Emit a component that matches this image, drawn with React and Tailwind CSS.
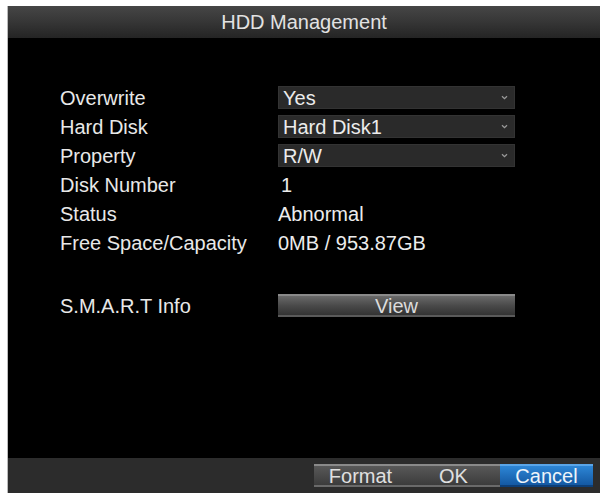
import React from "react";

const font = { fontFamily: '"Liberation Sans", Arial, sans-serif' };

function Chevron() {
  return (
    <svg width="7" height="5" viewBox="0 0 7 5" className="shrink-0">
      <path d="M1 1.2 L3.5 3.6 L6 1.2" stroke="#9a9a9a" strokeWidth="1.3" fill="none" />
    </svg>
  );
}

function Select({ value }) {
  return (
    <div className="w-[237px] h-[23px] bg-[#2a2a2a] border border-[#333] flex items-center justify-between pl-[4px] pr-[6px] text-[#ececec]">
      <span className="leading-none">{value}</span>
      <Chevron />
    </div>
  );
}

function Row({ label, children }) {
  return (
    <div className="h-[29px] flex items-center">
      <div className="w-[218px] text-[#e8e8e8] leading-none">{label}</div>
      {children}
    </div>
  );
}

function BarButton({ label, active }) {
  return (
    <div
      className={
        "w-[93px] h-[23px] flex items-center justify-center leading-none text-[20px] border-t-2 border-b-2 " +
        (active
          ? "bg-gradient-to-b from-[#2d86d6] to-[#1459a3] border-t-[#5aa5e8] border-b-[#0d3f78] text-[#eef4fa]"
          : "bg-gradient-to-b from-[#585858] to-[#3c3c3c] border-t-[#8a8a8a] border-b-[#6a6a6a] text-[#e0e0e0]")
      }
    >
      {label}
    </div>
  );
}

export default function App() {
  return (
    <div className="w-[600px] h-[493px] bg-white pl-[7px] pt-[6px] overflow-hidden" style={font}>
      <div className="h-full flex flex-col bg-black border-l border-[#bbb]">
        <div className="h-[32px] shrink-0 bg-gradient-to-b from-[#464646] via-[#363636] to-[#242424] flex items-center justify-center text-[20px] text-[#e2e2e2] leading-none">
          HDD Management
        </div>
        <div className="flex-1 pl-[52px] pt-[45px] text-[20px]">
          <Row label="Overwrite"><Select value="Yes" /></Row>
          <Row label="Hard Disk"><Select value="Hard Disk1" /></Row>
          <Row label="Property"><Select value="R/W" /></Row>
          <Row label="Disk Number"><span className="text-[#ececec] leading-none pl-[3px]">1</span></Row>
          <Row label="Status"><span className="text-[#ececec] leading-none">Abnormal</span></Row>
          <Row label="Free Space/Capacity"><span className="text-[#ececec] leading-none">0MB / 953.87GB</span></Row>
          <div className="mt-[34px]">
            <Row label="S.M.A.R.T Info">
              <div className="w-[237px] h-[23px] flex items-center justify-center bg-gradient-to-b from-[#6a6a6a] via-[#4a4a4a] to-[#333] border-t-2 border-t-[#8a8a8a] border-b-2 border-b-[#5a5a5a] text-[#dcdcdc] leading-none">
                View
              </div>
            </Row>
          </div>
        </div>
        <div className="h-[35px] shrink-0 bg-[#2c2c2c] flex items-center justify-end pr-[7px]">
          <BarButton label="Format" />
          <BarButton label="OK" />
          <BarButton label="Cancel" active />
        </div>
      </div>
    </div>
  );
}
